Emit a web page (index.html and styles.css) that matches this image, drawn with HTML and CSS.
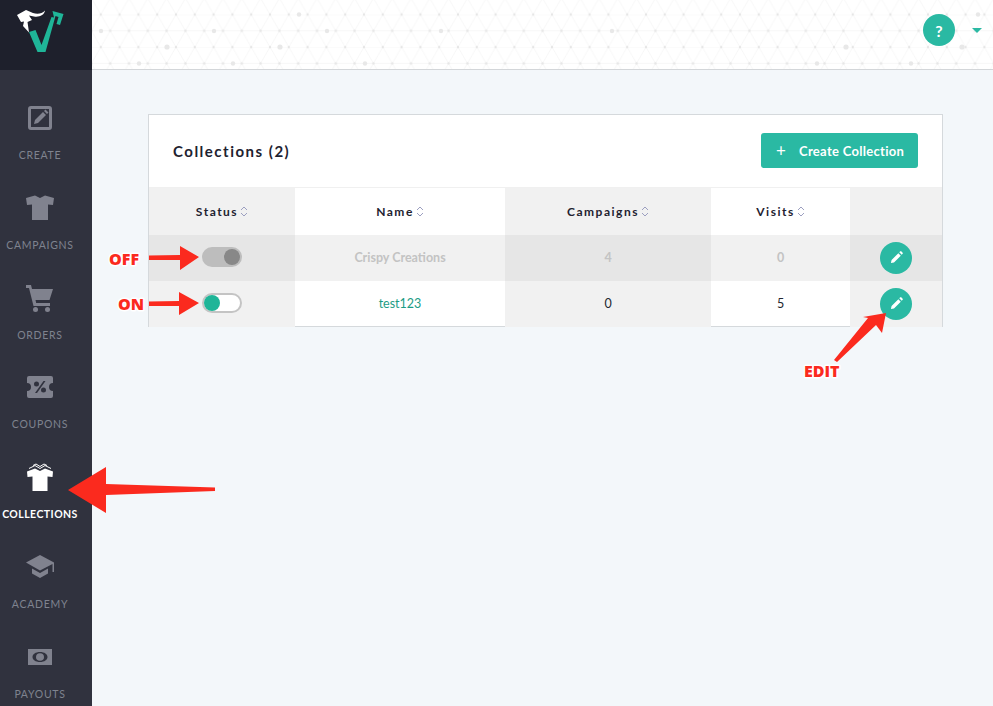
FILE: index.html
```html
<!DOCTYPE html>
<html lang="en">
<head>
<meta charset="utf-8">
<title>Collections</title>
<link rel="stylesheet" href="styles.css">
</head>
<body>
<div class="app">
  <aside class="sidebar">
    <div class="logo">
      <svg width="70" height="60" viewBox="0 0 70 60">
        <path class="logo-green" d="M29 32L35.500 30L41.500 45L51.500 17L54 17.500L52.500 11L63.500 14L60 25L56.500 24L58.500 17L55.500 16L45.500 52H37.500Z"/>
        <path class="logo-white" d="M17 15L26 10L33 13C37 14.500 42 14 45 10.500C44.500 15 39 17.500 34 16.500L29 15.500L32 20L27.500 22L29 32.500L23 26L24 21.500L21 22Z"/>
      </svg>
    </div>
    <nav class="nav">
      <a class="nav-item">
        <svg class="nav-icon" viewBox="0 0 28 28"><rect class="ic-line" x="3.500" y="3.500" width="21" height="21" rx="1.500"/><path d="M8 20l1-4 8-8 3 3-8 8zM18 7l1.500-1.500 3 3L21 10z"/></svg>
        <span class="nav-label">CREATE</span>
      </a>
      <a class="nav-item">
        <svg class="nav-icon" viewBox="0 0 28 28"><path d="M9 1.500L14 4L19 1.500L28 4L27 11L22 10.500V26H6V10.500L1 11L0 4Z"/></svg>
        <span class="nav-label">CAMPAIGNS</span>
      </a>
      <a class="nav-item">
        <svg class="nav-icon" viewBox="0 0 28 28"><path d="M0 1h5l1 4h21l-3.500 11H9.500l.7 3H24v3H7.500L3 4H0z"/><circle cx="9.500" cy="25.500" r="2.500"/><circle cx="21.500" cy="25.500" r="2.500"/></svg>
        <span class="nav-label">ORDERS</span>
      </a>
      <a class="nav-item">
        <svg class="nav-icon" viewBox="0 0 28 28"><path fill-rule="evenodd" d="M3 3h22a2 2 0 0 1 2 2v5a4 4 0 0 0 0 8v5a2 2 0 0 1-2 2H3a2 2 0 0 1-2-2v-5a4 4 0 0 0 0-8V5a2 2 0 0 1 2-2zM17.500 8L9 20h2l8.500-12zM10.500 8.500a2.500 2.500 0 1 0 0 5 2.500 2.500 0 0 0 0-5zM17.500 14.500a2.500 2.500 0 1 0 0 5 2.500 2.500 0 0 0 0-5z"/></svg>
        <span class="nav-label">COUPONS</span>
      </a>
      <a class="nav-item active">
        <svg class="nav-icon" viewBox="0 0 28 28"><path d="M1 8.500L9 5.500L14 8L19 5.500L27 8.500L26.500 14L21.500 13.500V28H6.500V13.500L1.500 14Z"/><path class="ic-thin" d="M3 5.500L9 2.500L14 5.500L19 2.500L25 5.500M7 2.500L10 1L14 3.500L18 1L21 2.500"/></svg>
        <span class="nav-label">COLLECTIONS</span>
      </a>
      <a class="nav-item">
        <svg class="nav-icon" viewBox="0 0 28 28"><path d="M14 2L28 9.500V19h-1.500v-8L14 17.500L0 9.500Z"/><path d="M6 15.500L14 20L22 15.500V20.500L14 25L6 20.500Z"/></svg>
        <span class="nav-label">ACADEMY</span>
      </a>
      <a class="nav-item">
        <svg class="nav-icon" viewBox="0 0 28 28"><path fill-rule="evenodd" d="M2 6h24v16H2zM14 9c-4.500 0-7.500 2.300-7.500 5s3 5 7.500 5 7.500-2.300 7.500-5-3-5-7.500-5z"/><ellipse cx="14" cy="14" rx="4" ry="3.800"/></svg>
        <span class="nav-label">PAYOUTS</span>
      </a>
    </nav>
  </aside>

  <div class="main">
    <header class="topbar">
      <svg class="pattern" width="901" height="69">
        <defs>
          <pattern id="lattice" x="-10" y="14.500" width="37.600" height="32.600" patternUnits="userSpaceOnUse">
            <path class="lat-line" d="M0 0H37.600M18.800 16.300H37.600M0 16.300H18.800M0 0L18.800 32.600M37.600 0L18.800 32.600M0 32.600L18.800 0M37.600 32.600L18.800 0"/>
            <circle class="lat-dot" cx="0" cy="0" r="1.200"/><circle class="lat-dot" cx="37.600" cy="0" r="1.200"/>
            <circle class="lat-dot" cx="18.800" cy="0" r="1.200"/>
            <circle class="lat-dot" cx="9.400" cy="16.300" r="1.200"/><circle class="lat-dot" cx="28.200" cy="16.300" r="1.200"/>
            <circle class="lat-dot" cx="0" cy="32.600" r="1.200"/><circle class="lat-dot" cx="18.800" cy="32.600" r="1.200"/><circle class="lat-dot" cx="37.600" cy="32.600" r="1.200"/>
          </pattern>
        </defs>
        <rect width="901" height="69" fill="url(#lattice)"/>
        <g class="big-dots">
          <circle cx="9" cy="31" r="2.200"/><circle cx="122" cy="31" r="2.200"/><circle cx="235" cy="31" r="2.200"/><circle cx="349" cy="31" r="2.200"/><circle cx="520" cy="31" r="2.200"/>
          <circle cx="75" cy="47" r="2.600"/><circle cx="188" cy="47" r="2.600"/><circle cx="754" cy="47" r="2.600"/><circle cx="870" cy="47" r="2.600"/>
          <circle cx="47" cy="63.500" r="2.200"/><circle cx="141" cy="63.500" r="2.200"/><circle cx="273" cy="63.500" r="2.200"/><circle cx="725" cy="63.500" r="2.200"/><circle cx="819" cy="63.500" r="2.200"/>
          <circle cx="207" cy="14.500" r="2.200"/><circle cx="886" cy="14.500" r="2.200"/>
        </g>
      </svg>
      <div class="top-actions">
        <span class="help">?</span>
        <span class="caret"></span>
      </div>
    </header>

    <section class="content">
      <div class="card">
        <div class="card-head">
          <h1 class="card-title">Collections (2)</h1>
          <button class="create-btn"><span class="plus">+</span>Create Collection</button>
        </div>
        <table class="grid">
          <colgroup>
            <col class="c-status"><col class="c-name"><col class="c-camp"><col class="c-visits"><col class="c-act">
          </colgroup>
          <thead>
            <tr>
              <th>Status<svg class="sort" viewBox="0 0 8 11"><path d="M1 4L4 1L7 4M1 7L4 10L7 7"/></svg></th>
              <th>Name<svg class="sort" viewBox="0 0 8 11"><path d="M1 4L4 1L7 4M1 7L4 10L7 7"/></svg></th>
              <th>Campaigns<svg class="sort" viewBox="0 0 8 11"><path d="M1 4L4 1L7 4M1 7L4 10L7 7"/></svg></th>
              <th>Visits<svg class="sort" viewBox="0 0 8 11"><path d="M1 4L4 1L7 4M1 7L4 10L7 7"/></svg></th>
              <th></th>
            </tr>
          </thead>
          <tbody>
            <tr class="off">
              <td><span class="toggle toggle-off"><span class="knob"></span></span></td>
              <td>Crispy Creations</td>
              <td>4</td>
              <td>0</td>
              <td><button class="edit-btn"><svg viewBox="0 0 14 14"><path d="M1 13l.7-3.300L9 2.400l2.600 2.600-7.300 7.300zM10 1.400l1-1a.8.8 0 0 1 1.100 0l1.500 1.500a.8.8 0 0 1 0 1.100l-1 1z"/></svg></button></td>
            </tr>
            <tr>
              <td><span class="toggle toggle-on"><span class="knob"></span></span></td>
              <td><a class="link">test123</a></td>
              <td>0</td>
              <td>5</td>
              <td><button class="edit-btn"><svg viewBox="0 0 14 14"><path d="M1 13l.7-3.300L9 2.400l2.600 2.600-7.300 7.300zM10 1.400l1-1a.8.8 0 0 1 1.100 0l1.500 1.500a.8.8 0 0 1 0 1.100l-1 1z"/></svg></button></td>
            </tr>
          </tbody>
        </table>
      </div>
    </section>
  </div>
</div>

<svg class="notes" width="993" height="706" viewBox="0 0 993 706">
  <path class="arrow" d="M215 487.500L106 484V467L68 490L106 513V495L215 491Z"/>
  <path class="arrow" d="M149 255.500L180 255V246L199 257L180 270V260L149 260Z"/>
  <path class="arrow" d="M149 301.500L179 301V292L199 303L179 315V306L149 306Z"/>
  <path class="arrow" d="M834 360L868 318L863 317L886 313L882 333L876 325L837 362Z"/>
  <text class="note" x="109" y="265">OFF</text>
  <text class="note" x="118" y="310">ON</text>
  <text class="note" x="804" y="377">EDIT</text>
</svg>
</body>
</html>
```
FILE: styles.css
```css
* { box-sizing: border-box; }
html, body { margin: 0; height: 100%; }
body {
  position: relative;
  width: 993px;
  height: 706px;
  overflow: hidden;
  font-family: Lato, "Open Sans", sans-serif;
  background: #f3f7fa;
}
.app { display: flex; height: 706px; }

.sidebar { width: 92px; flex: none; background: #30323e; overflow: hidden; }
.logo { height: 70px; background: #1e202c; display: flex; justify-content: flex-start; }
.logo svg { display: block; }
.logo-green { fill: #1fb598; }
.logo-white { fill: #fff; }

.nav { padding-top: 4px; }
.nav-item {
  height: 89.8px;
  padding-top: 30px;
  display: flex;
  flex-direction: column;
  align-items: center;
  color: #7f838f;
  margin-right: 12px;
}
.nav-icon { width: 28px; height: 28px; fill: #80828e; display: block; margin-bottom: 16px; flex: none; }
.ic-line { fill: none; stroke: #80828e; stroke-width: 3; }
.ic-thin { fill: none; stroke: #fff; stroke-width: 1; }
.nav-label { font-size: 10.500px; line-height: 14px; letter-spacing: .7px; white-space: nowrap; }
.active { color: #fff; }
.active .nav-icon { fill: #fff; }
.active .nav-label { font-weight: 700; letter-spacing: .45px; }

.main { flex: 1; min-width: 0; }
.topbar {
  position: relative;
  height: 70px;
  background: #fff;
  border-bottom: 1px solid #d3d6d9;
  display: flex;
  justify-content: flex-end;
  align-items: flex-start;
}
.pattern { position: absolute; left: 0; top: 0; }
.lat-line { fill: none; stroke: #f4f4f4; stroke-width: .7; }
.lat-dot { fill: #e6e6e6; }
.big-dots { fill: #e8e8e8; }
.top-actions { position: relative; display: flex; align-items: center; padding: 14px 11px 0 0; gap: 17px; }
.help {
  width: 32px; height: 32px; border-radius: 50%;
  background: #2ab9a3; color: #fff;
  display: flex; align-items: center; justify-content: center;
  font-size: 16px; font-weight: 700;
}
.caret {
  width: 0; height: 0;
  border-left: 5px solid transparent;
  border-right: 5px solid transparent;
  border-top: 5px solid #2ab9a3;
}

.content { padding: 44px 50px 0 56px; }
.card { background: #fff; border: 1px solid #d5d9dc; height: 213px; }
.card-head {
  height: 72px;
  padding: 18px 24px 0 24px;
  display: flex;
  justify-content: space-between;
  align-items: flex-start;
}
.card-title { margin: 9px 0 0; font-size: 15px; line-height: 18px; font-weight: 700; letter-spacing: 1.500px; color: #1e2230; }
.create-btn {
  width: 157px; height: 35px;
  border: 0; border-radius: 3px;
  background: #2ab9a3; color: #fff;
  font: 700 13px Lato, sans-serif;
  letter-spacing: .3px;
  display: flex; align-items: center;
  padding: 0 0 0 15px;
}
.plus { font-weight: 400; font-size: 17px; width: 23px; text-align: left; }

.grid { width: 793px; table-layout: fixed; border-collapse: collapse; }
.c-status { width: 146px; }
.c-name { width: 210px; }
.c-camp { width: 206px; }
.c-visits { width: 139px; }
.c-act { width: 92px; }
.grid th, .grid td { padding: 0; text-align: center; }
.grid th {
  height: 47px;
  font-size: 12px;
  font-weight: 700;
  letter-spacing: 1.500px;
  color: #1e2230;
  border-top: 1px solid #f0f0f0;
}
.grid td { height: 46px; font-size: 12.500px; color: #23262f; }
.grid tr > :nth-child(odd) { background: #f1f1f1; }
.grid .off > :nth-child(odd) { background: #e6e6e6; }
.grid .off > :nth-child(even) { background: #f1f1f1; }
.grid .off td { color: #c3c3c3; font-weight: 700; }
.sort { width: 8px; height: 11px; margin-left: 2px; vertical-align: -1px; fill: none; stroke: #9c9fc0; stroke-width: 1; }
.link { color: #1c9c85; }

.toggle {
  display: inline-flex; align-items: center;
  width: 40px; height: 20px; border-radius: 10px;
  vertical-align: middle;
  margin-top: -2px;
}
.toggle-off { background: #bdbdbd; justify-content: flex-end; padding-right: 2px; }
.toggle-off .knob { width: 16px; height: 16px; border-radius: 50%; background: #888; }
.toggle-on { background: #fff; border: 2px solid #c4c4c4; padding-left: 0; }
.toggle-on .knob { width: 16px; height: 16px; border-radius: 50%; background: #1fb598; }

.edit-btn {
  width: 32px; height: 32px; border: 0; border-radius: 50%;
  background: #2ab9a3; padding: 0;
  display: inline-flex; align-items: center; justify-content: center;
  vertical-align: middle;
}
.edit-btn svg { width: 13px; height: 13px; fill: #fff; }

.notes { position: absolute; left: 0; top: 0; pointer-events: none; }
.arrow { fill: #fb2a1e; }
.note {
  font-family: "Open Sans", sans-serif;
  font-size: 16px;
  font-weight: 800;
  fill: #fb2a1e;
  stroke: #fff;
  stroke-width: 3px;
  paint-order: stroke;
  stroke-linejoin: round;
}
```
